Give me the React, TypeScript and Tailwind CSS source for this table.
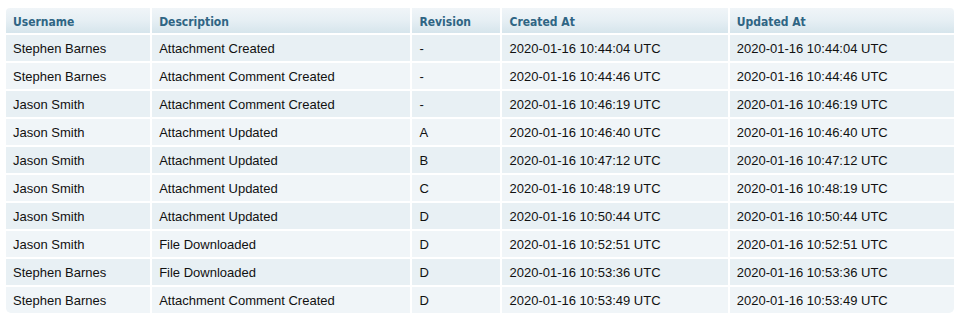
import React from "react";

const rows: [string, string, string, string, string][] = [
  ["Stephen Barnes", "Attachment Created", "-", "2020-01-16 10:44:04 UTC", "2020-01-16 10:44:04 UTC"],
  ["Stephen Barnes", "Attachment Comment Created", "-", "2020-01-16 10:44:46 UTC", "2020-01-16 10:44:46 UTC"],
  ["Jason Smith", "Attachment Comment Created", "-", "2020-01-16 10:46:19 UTC", "2020-01-16 10:46:19 UTC"],
  ["Jason Smith", "Attachment Updated", "A", "2020-01-16 10:46:40 UTC", "2020-01-16 10:46:40 UTC"],
  ["Jason Smith", "Attachment Updated", "B", "2020-01-16 10:47:12 UTC", "2020-01-16 10:47:12 UTC"],
  ["Jason Smith", "Attachment Updated", "C", "2020-01-16 10:48:19 UTC", "2020-01-16 10:48:19 UTC"],
  ["Jason Smith", "Attachment Updated", "D", "2020-01-16 10:50:44 UTC", "2020-01-16 10:50:44 UTC"],
  ["Jason Smith", "File Downloaded", "D", "2020-01-16 10:52:51 UTC", "2020-01-16 10:52:51 UTC"],
  ["Stephen Barnes", "File Downloaded", "D", "2020-01-16 10:53:36 UTC", "2020-01-16 10:53:36 UTC"],
  ["Stephen Barnes", "Attachment Comment Created", "D", "2020-01-16 10:53:49 UTC", "2020-01-16 10:53:49 UTC"],
];

const headers = ["Username", "Description", "Revision", "Created At", "Updated At"];
const widths = ["w-[144px]", "w-[258px]", "w-[88px]", "w-[225px]", "w-[224px]"];

export default function App() {
  return (
    <div className="w-[960px] h-[323px] bg-white pt-[6px] pl-[4px]">
      <table className="border-separate border-spacing-[2px] table-fixed w-[952px]">
        <thead>
          <tr>
            {headers.map((h, i) => (
              <th
                key={h}
                className={`${widths[i]} h-[25px] p-0 pl-[7px] pt-[2px] text-left align-middle bg-gradient-to-b from-[#f0f5f8] via-[#e6eff4] to-[#d6e5ec] text-[#2f6584] text-[12px] font-bold [font-family:'DejaVu_Sans_Condensed','DejaVu_Sans',sans-serif] ${i === 0 ? "rounded-tl-[4px]" : ""} ${i === 4 ? "rounded-tr-[4px]" : ""}`}
              >
                {h}
              </th>
            ))}
          </tr>
        </thead>
        <tbody>
          {rows.map((r, ri) => {
            const bg = ri % 2 === 0 ? "bg-[#e8f0f4]" : "bg-[#f0f5f8]";
            const last = ri === rows.length - 1;
            return (
              <tr key={ri}>
                {r.map((c, ci) => (
                  <td
                    key={ci}
                    className={`${bg} h-[26px] p-0 pl-[7px] pt-[2px] align-middle text-[13px] text-[#111111] [font-family:'Liberation_Sans',Arial,sans-serif] whitespace-nowrap ${last && ci === 0 ? "rounded-bl-[5px]" : ""} ${last && ci === 4 ? "rounded-br-[5px]" : ""}`}
                  >
                    {c}
                  </td>
                ))}
              </tr>
            );
          })}
        </tbody>
      </table>
    </div>
  );
}
